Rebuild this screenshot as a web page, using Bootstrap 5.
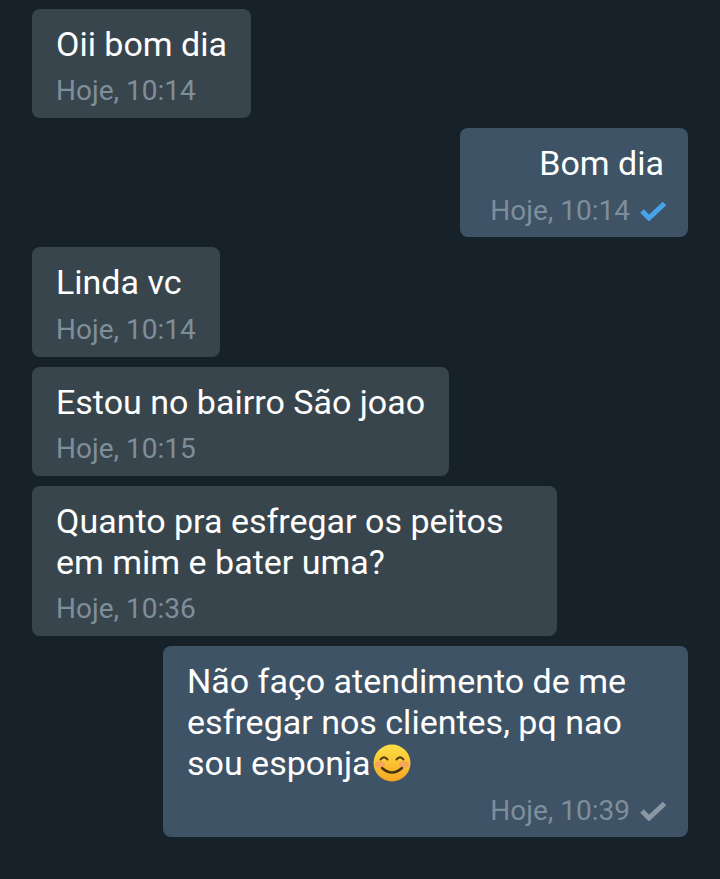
<!DOCTYPE html>
<html lang="pt">
<head>
  <meta charset="UTF-8" />
  <meta name="viewport" content="width=device-width, initial-scale=1.0"/>
  <title>Conversa</title>
  <link href="https://cdn.jsdelivr.net/npm/bootstrap@5.3.3/dist/css/bootstrap.min.css" rel="stylesheet">
  <style>
    body { background: #17212a; font-family: Roboto, "Liberation Sans", sans-serif; }
    .chat-list { padding: 8.8px 32px 42px; gap: 10px; }
    .bubble { padding: 15px 24px 10.8px; border-radius: 8px; color: #fff; }
    .bubble-in { background: #39454d; }
    .bubble-out { background: #3e5366; }
    .msg-text { font-size: 34px; line-height: 40.9px; }
    .msg-meta { font-size: 28px; line-height: 32px; margin-top: 10.6px; color: #7e8e9b; gap: 10px; }
    .tick { width: 26px; height: 20px; margin-right: -2px; }
    .smile { width: 40px; height: 40px; margin-left: 1px; vertical-align: -8px; }
    .w-in-1 { width: 219px; }
    .w-out-1 { width: 228px; }
    .w-in-2 { width: 188px; }
    .w-in-3 { width: 417px; }
    .w-wide { width: 525px; }
  </style>
</head>
<body>
  <div class="d-flex flex-column chat-list">

    <div class="bubble bubble-in w-in-1 align-self-start">
      <div class="msg-text text-nowrap">Oii bom dia</div>
      <div class="msg-meta d-flex align-items-center">Hoje, 10:14</div>
    </div>

    <div class="bubble bubble-out w-out-1 align-self-end">
      <div class="msg-text text-nowrap text-end">Bom dia</div>
      <div class="msg-meta d-flex align-items-center justify-content-end">Hoje, 10:14
        <svg class="tick" viewBox="0 0 26 20"><path d="M2 10 9 17 24.5 2.5" fill="none" stroke="#46a3ea" stroke-width="5"/></svg>
      </div>
    </div>

    <div class="bubble bubble-in w-in-2 align-self-start">
      <div class="msg-text text-nowrap">Linda vc</div>
      <div class="msg-meta d-flex align-items-center">Hoje, 10:14</div>
    </div>

    <div class="bubble bubble-in w-in-3 align-self-start">
      <div class="msg-text text-nowrap">Estou no bairro São joao</div>
      <div class="msg-meta d-flex align-items-center">Hoje, 10:15</div>
    </div>

    <div class="bubble bubble-in w-wide align-self-start">
      <div class="msg-text text-nowrap">Quanto pra esfregar os peitos<br>em mim e bater uma?</div>
      <div class="msg-meta d-flex align-items-center">Hoje, 10:36</div>
    </div>

    <div class="bubble bubble-out w-wide align-self-end">
      <div class="msg-text text-nowrap">Não faço atendimento de me<br>esfregar nos clientes, pq nao<br>sou esponja<svg class="smile" viewBox="0 0 40 40">
          <defs><linearGradient id="face" x1="0" y1="0" x2="0" y2="1"><stop offset="0" stop-color="#fde047"/><stop offset="1" stop-color="#f5a623"/></linearGradient></defs>
          <circle cx="20" cy="20" r="18.5" fill="url(#face)"/>
          <ellipse cx="8" cy="21.5" rx="5" ry="3.5" fill="#f59a6a" opacity=".7"/>
          <ellipse cx="32" cy="21.5" rx="5" ry="3.5" fill="#f59a6a" opacity=".7"/>
          <path d="M8.5 16.5q3.5-4.5 7 0M24.5 16.5q3.5-4.5 7 0" fill="none" stroke="#4a3410" stroke-width="2" stroke-linecap="round"/>
          <path d="M10 25q10 9 20 0" fill="none" stroke="#4a3410" stroke-width="2.4" stroke-linecap="round"/>
        </svg></div>
      <div class="msg-meta d-flex align-items-center justify-content-end">Hoje, 10:39
        <svg class="tick" viewBox="0 0 26 20"><path d="M2 10 9 17 24.5 2.5" fill="none" stroke="#8a98a4" stroke-width="5"/></svg>
      </div>
    </div>

  </div>
  <script src="https://cdn.jsdelivr.net/npm/bootstrap@5.3.3/dist/js/bootstrap.bundle.min.js"></script>
</body>
</html>
